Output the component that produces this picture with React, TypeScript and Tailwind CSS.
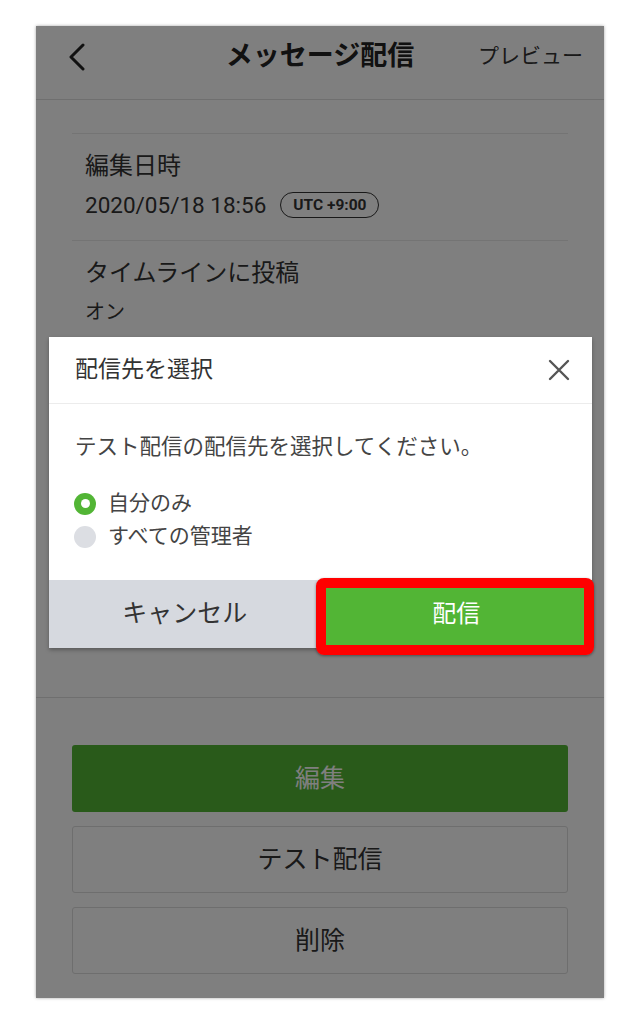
const font = "font-['Roboto','Noto_Sans_CJK_JP',sans-serif]"

function BackIcon() {
  return (
    <svg width="16" height="28" viewBox="0 0 16 28" fill="none">
      <polyline points="14,2 2,14 14,26" stroke="#222" strokeWidth="3" strokeLinecap="round" strokeLinejoin="round" />
    </svg>
  )
}

function CloseIcon() {
  return (
    <svg width="22" height="22" viewBox="0 0 22 22" fill="none">
      <path d="M2 2 L20 20 M20 2 L2 20" stroke="#555" strokeWidth="2.4" strokeLinecap="round" />
    </svg>
  )
}

function Radio({ checked, label }: { checked: boolean; label: string }) {
  return (
    <div className="flex items-center gap-[12px] h-[33px]">
      {checked ? (
        <div className="w-[22px] h-[22px] rounded-full bg-[#52b535] flex items-center justify-center">
          <div className="w-[9px] h-[9px] rounded-full bg-white" />
        </div>
      ) : (
        <div className="w-[22px] h-[22px] rounded-full bg-[#dcdee3]" />
      )}
      <span className="text-[21px] text-[#444]">{label}</span>
    </div>
  )
}

export default function App() {
  return (
    <div className={`w-[640px] h-[1024px] bg-white pt-[26px] pl-[36px] ${font}`}>
      <div className="relative w-[568px] h-[972px] bg-white flex flex-col shadow-[0_0_3px_rgba(0,0,0,0.35)] overflow-hidden">
        {/* Header */}
        <div className="h-[74px] pb-[12px] border-b border-[#dedede] grid grid-cols-[1fr_auto_1fr] items-center">
          <div className="pl-[33px] flex items-center">
            <BackIcon />
          </div>
          <h1 className="text-[27px] font-bold text-[#222]">メッセージ配信</h1>
          <div className="pr-[21px] text-right text-[21px] text-[#333]">プレビュー</div>
        </div>

        {/* Details */}
        <div className="px-[36px] pt-[33px]">
          <div className="border-t border-[#e8e8e8] pl-[13px] pt-[16px] pb-[20px]">
            <div className="text-[24px] leading-[32px] text-[#333]">編集日時</div>
            <div className="mt-[8px] flex items-center gap-[14px] leading-[30px]">
              <span className="text-[22.5px] text-[#333]">2020/05/18 18:56</span>
              <span className="h-[26px] px-[12px] rounded-full border-[1.5px] border-[#333] text-[15.5px] font-bold text-[#333] flex items-center">
                UTC +9:00
              </span>
            </div>
          </div>
          <div className="border-t border-[#e8e8e8] pl-[13px] pt-[16px] pb-[20px]">
            <div className="text-[24px] leading-[32px] text-[#333]">タイムラインに投稿</div>
            <div className="mt-[8px] text-[20px] leading-[30px] text-[#333]">オン</div>
          </div>
        </div>

        {/* Actions */}
        <div className="mt-auto border-t border-[#dedede] pt-[47px] pb-[24px] px-[36px] flex flex-col gap-[14px]">
          <button className="h-[67px] rounded-[3px] bg-[#52b535] text-white text-[25px]">編集</button>
          <button className="h-[67px] rounded-[3px] border border-[#dcdcdc] bg-white text-[#333] text-[25px]">テスト配信</button>
          <button className="h-[67px] rounded-[3px] border border-[#dcdcdc] bg-white text-[#333] text-[25px]">削除</button>
        </div>

        {/* Overlay */}
        <div className="absolute inset-0 bg-black/50" />

        {/* Modal */}
        <div className="absolute left-[13px] top-[311px] w-[543px] bg-white shadow-[0_2px_4px_rgba(0,0,0,0.3)]">
          <div className="h-[67px] border-b border-[#ececec] flex items-center justify-between pl-[26px] pr-[22px]">
            <span className="text-[23px] text-[#333]">配信先を選択</span>
            <CloseIcon />
          </div>
          <div className="pl-[25px] pr-[22px] pt-[28px] pb-[27px]">
            <p className="pl-[1px] text-[21.5px] leading-[30px] text-[#444]">テスト配信の配信先を選択してください。</p>
            <div className="mt-[25px] flex flex-col">
              <Radio checked label="自分のみ" />
              <Radio checked={false} label="すべての管理者" />
            </div>
          </div>
          <div className="grid grid-cols-2 h-[68px]">
            <button className="bg-[#d6d9df] text-[25px] text-[#333]">キャンセル</button>
            <button className="bg-[#52b535] text-[24px] text-white">配信</button>
          </div>

          {/* Highlight */}
          <div className="absolute left-[267px] top-[241px] w-[278px] h-[77px] border-[10px] border-[#ff0000] rounded-[8px] shadow-[0_1px_3px_rgba(0,0,0,0.4)]" />
        </div>
      </div>
    </div>
  )
}
